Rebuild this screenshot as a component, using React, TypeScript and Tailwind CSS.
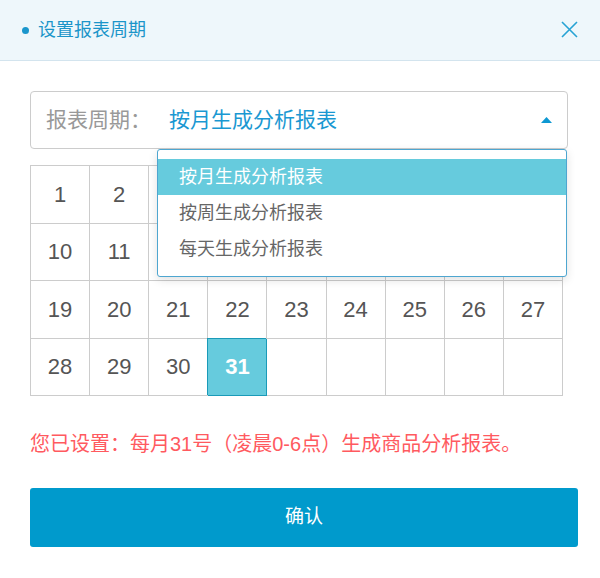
import React from 'react';

const FONT = "font-['Liberation_Sans','Noto_Sans_CJK_SC',sans-serif]";

const options = ['按月生成分析报表', '按周生成分析报表', '每天生成分析报表'];

export default function App() {
  const days = Array.from({ length: 36 }, (_, i) => (i < 31 ? i + 1 : null));

  return (
    <div className={`w-[600px] h-[578px] bg-white ${FONT}`}>
      <header className="h-[61px] flex items-center justify-between border-b border-[#d3e4ee] bg-[#eef7fb] pl-[22px] pr-[22px]">
        <div className="flex items-center">
          <span className="w-[7px] h-[7px] rounded-full bg-[#1a96cc]" />
          <span className="ml-[9px] text-[18px] text-[#1b95c9] leading-none">设置报表周期</span>
        </div>
        <svg width="17" height="17" viewBox="0 0 17 17" className="mb-[1px]">
          <path d="M1 1L16 16M16 1L1 16" stroke="#27a3d4" strokeWidth="1.6" fill="none" />
        </svg>
      </header>

      <div className="px-[30px] pt-[30px]">
        <div className="relative">
          <div className="w-[538px] h-[58px] border border-[#cccccc] rounded-[4px] flex items-center pl-[15px] pr-[15px]">
            <span className="text-[21px] text-[#999999]">报表周期：</span>
            <span className="ml-[18px] text-[21px] text-[#1a98d2]">按月生成分析报表</span>
            <svg width="11" height="6" viewBox="0 0 11 6" className="ml-auto">
              <path d="M5.5 0L11 6H0Z" fill="#0e98d2" />
            </svg>
          </div>

          <div className="mt-[16px] w-[533px] grid grid-cols-9 border-t border-l border-[#cccccc]">
            {days.map((d, i) =>
              d === 31 ? (
                <div
                  key={i}
                  className="relative z-[1] h-[57.5px] flex items-center justify-center border-r border-b border-[#1a9ab8] bg-[#66cbdd] shadow-[-1px_-1px_0_0_#1a9ab8] text-[22px] font-bold text-white"
                >
                  {d}
                </div>
              ) : (
                <div
                  key={i}
                  className="h-[57.5px] flex items-center justify-center border-r border-b border-[#cccccc] text-[22px] text-[#555555]"
                >
                  {d}
                </div>
              )
            )}
          </div>

          <ul className="absolute z-10 left-[127px] top-[58px] w-[410px] bg-white border border-[#4ea6d0] rounded-[3px] py-[9px] shadow-[0_3px_10px_rgba(0,0,0,0.12)]">
            {options.map((o, i) => (
              <li
                key={o}
                className={`h-[36px] flex items-center pl-[21px] text-[18px] ${
                  i === 0 ? 'bg-[#66cbdd] text-white' : 'text-[#666666]'
                }`}
              >
                {o}
              </li>
            ))}
          </ul>
        </div>

        <p className="mt-[33px] text-[20px] leading-[30px] text-[#ff5a5f]">
          您已设置：每月31号（凌晨0-6点）生成商品分析报表。
        </p>

        <button className="mt-[29px] w-[548px] h-[59px] rounded-[3px] bg-[#009acc] text-white text-[19px]">
          确认
        </button>
      </div>
    </div>
  );
}
